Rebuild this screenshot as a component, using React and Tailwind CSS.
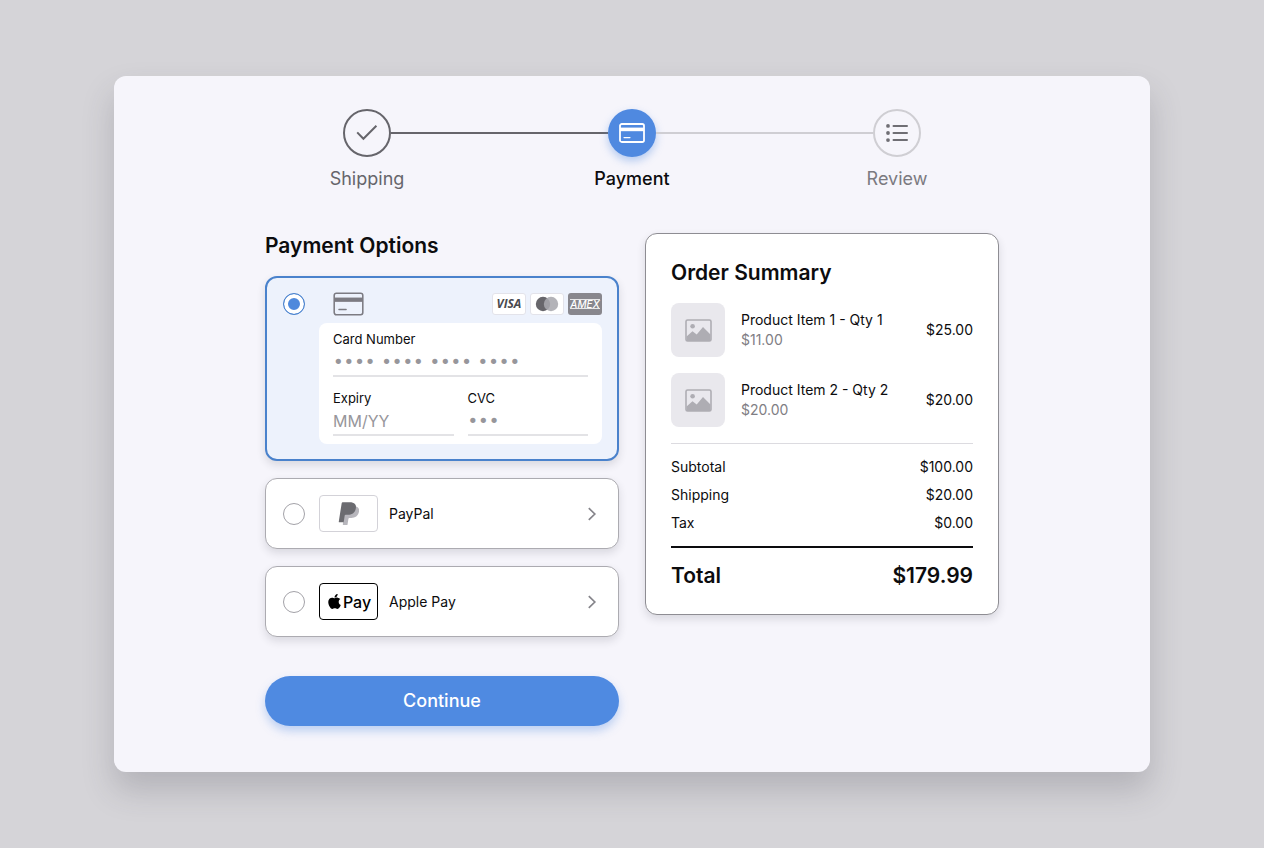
import React, { useState } from 'react';
import { FaApple } from 'react-icons/fa';

const items = [
    { id: 1, name: 'Product Item 1 - Qty 1', unitPrice: '$11.00', price: '$25.00' },
    { id: 2, name: 'Product Item 2 - Qty 2', unitPrice: '$20.00', price: '$20.00' },
];

const totals = [
    { label: 'Subtotal', value: '$100.00' },
    { label: 'Shipping', value: '$20.00' },
    { label: 'Tax', value: '$0.00' },
];

const orderTotal = '$179.99';

const CheckIcon = () => (
    <svg width="22" height="18" viewBox="0 0 22 18" fill="none" stroke="currentColor" strokeWidth="2" aria-hidden="true">
        <path d="M1.2 8.4 7.4 14.8 20.4 1.8" />
    </svg>
);

const CardIcon = ({ className, stroke = 1.8 }) => (
    <svg className={className} viewBox="0 0 26 20" fill="none" stroke="currentColor" strokeWidth={stroke} aria-hidden="true">
        <rect x="1" y="1" width="24" height="18" rx="1.8" />
        <path d="M1 6.4h24" strokeWidth="3.6" />
        <path d="M5 14.6h6" strokeLinecap="round" strokeWidth="1.2" />
    </svg>
);

const ListIcon = () => (
    <svg width="22" height="18" viewBox="0 0 22 18" fill="none" stroke="currentColor" aria-hidden="true">
        <path d="M7.5 1.9h13.5M7.5 9h13.5M7.5 16.1h13.5" strokeWidth="2" strokeLinecap="round" />
        <g fill="currentColor" stroke="none">
            <circle cx="2" cy="1.9" r="1.9" />
            <circle cx="2" cy="9" r="1.9" />
            <circle cx="2" cy="16.1" r="1.9" />
        </g>
    </svg>
);

const ImageIcon = () => (
    <svg width="27" height="23" viewBox="0 0 27 23" fill="none" aria-hidden="true">
        <rect x="1" y="1" width="25" height="21" rx="1.6" stroke="#aeadb3" strokeWidth="1.6" />
        <circle cx="7.6" cy="7.3" r="2.3" fill="#aeadb3" />
        <path d="M1.5 17.5 7.5 12.2l4.2 3.2L18 8 25.5 15.5V22h-24z" fill="#aeadb3" />
    </svg>
);

const PayPalIcon = () => (
    <svg width="21" height="24" viewBox="1 0 22.5 25" aria-hidden="true">
        <path
            transform="translate(4.4 4) scale(.95)"
            fill="#b7b6bc"
            d="M7.076 21.337H2.47a.641.641 0 0 1-.633-.74L4.944.901C5.026.382 5.474 0 5.998 0h7.46c2.57 0 4.578.543 5.69 1.81 1.01 1.15 1.304 2.42 1.012 4.287-.023.143-.047.288-.077.437-.983 5.05-4.349 6.797-8.647 6.797h-2.19c-.524 0-.968.382-1.05.9l-1.12 7.106z"
        />
        <path
            fill="#6b6b70"
            d="M7.076 21.337H2.47a.641.641 0 0 1-.633-.74L4.944.901C5.026.382 5.474 0 5.998 0h7.46c2.57 0 4.578.543 5.69 1.81 1.01 1.15 1.304 2.42 1.012 4.287-.023.143-.047.288-.077.437-.983 5.05-4.349 6.797-8.647 6.797h-2.19c-.524 0-.968.382-1.05.9l-1.12 7.106z"
        />
    </svg>
);

const ChevronIcon = () => (
    <svg className="ml-auto mr-1" width="10" height="14" viewBox="0 0 10 14" fill="none" stroke="#85848a" strokeWidth="1.7" aria-hidden="true">
        <path d="M1.8 1.2 7.8 7l-6 5.8" />
    </svg>
);

const radioClass = 'size-[22px] shrink-0 appearance-none rounded-full border border-[#a3a2a8] bg-white checked:border-[#4a82cc] checked:bg-[#4f89dc] checked:shadow-[inset_0_0_0_4px_#fff]';

const Stepper = () => (
    <ol className="mx-auto flex max-w-[610px] text-lg leading-6">
        <li className="flex w-20 flex-col items-center gap-2.5 text-[#66656b]">
            <span className="flex size-12 items-center justify-center rounded-full border-2 border-[#66656b]">
                <CheckIcon />
            </span>
            Shipping
        </li>
        <li aria-hidden="true" className="-mx-4 mt-[23px] h-0.5 flex-1 bg-[#66656b]" />
        <li className="flex w-20 flex-col items-center gap-2.5 font-medium text-[#0c0c0e]" aria-current="step">
            <span className="flex size-12 items-center justify-center rounded-full bg-[#4f89e0] text-white shadow-[0_4px_8px_rgba(79,137,224,0.4)]">
                <CardIcon className="h-5 w-[26px]" />
            </span>
            Payment
        </li>
        <li aria-hidden="true" className="-mx-4 mt-[23px] h-0.5 flex-1 bg-[#cfced3]" />
        <li className="flex w-20 flex-col items-center gap-2.5 text-[#7b7a80]">
            <span className="flex size-12 items-center justify-center rounded-full border-2 border-[#cfced3] text-[#6f6e74]">
                <ListIcon />
            </span>
            Review
        </li>
    </ol>
);

const CardBrands = () => (
    <div className="flex gap-1">
        <span className="flex h-[22px] w-[34px] items-center justify-center rounded-[3px] border border-[#e3e3ea] bg-white font-['Open_Sans'] text-xs font-bold italic text-[#4a4a4f]">
            VISA
        </span>
        <span className="flex h-[22px] w-[34px] items-center justify-center rounded-[3px] border border-[#e3e3ea] bg-white">
            <svg width="24" height="16" viewBox="0 0 24 16" role="img" aria-label="Mastercard">
                <circle cx="8" cy="8" r="7.2" fill="#67666b" />
                <circle cx="16" cy="8" r="7.2" fill="#a9a8ae" fillOpacity=".88" />
            </svg>
        </span>
        <span className="flex h-[22px] w-[34px] items-center justify-center rounded-[3px] bg-[#88878d] text-white">
            <span className="border-y border-white/80 text-[10px] leading-[8px] font-medium italic">AMEX</span>
        </span>
    </div>
);

const CardForm = () => (
    <div className="col-start-2 rounded-lg bg-white px-3.5 pt-[7px] pb-2 text-[13px] leading-[18px] text-[#0c0c0e]">
        <label htmlFor="card-number" className="block">Card Number</label>
        <input
            id="card-number"
            placeholder="•••• •••• •••• ••••"
            className="block h-[29px] w-full border-b-2 border-[#e3e3e6] font-['DejaVu_Sans'] text-lg outline-none placeholder:text-[#97969b]"
        />
        <div className="mt-3 grid grid-cols-2 gap-3.5">
            <div>
                <label htmlFor="expiry" className="block">Expiry</label>
                <input
                    id="expiry"
                    placeholder="MM/YY"
                    className="block h-[29px] w-full border-b-2 border-[#e3e3e6] text-base outline-none placeholder:text-[#97969b]"
                />
            </div>
            <div>
                <label htmlFor="cvc" className="block">CVC</label>
                <input
                    id="cvc"
                    placeholder="•••"
                    className="block h-[29px] w-full border-b-2 border-[#e3e3e6] font-['DejaVu_Sans'] text-lg outline-none placeholder:text-[#97969b]"
                />
            </div>
        </div>
    </div>
);

const PaymentOptions = () => {
    const [method, setMethod] = useState('card');

    const renderRow = (value, label, badge) => (
        <label className="flex items-center rounded-xl border border-[#acabb1] bg-white px-[17px] py-4 text-sm text-[#0c0c0e] shadow-[0_4px_8px_rgba(40,40,60,0.14)]">
            <input
                type="radio"
                name="method"
                checked={method === value}
                onChange={() => setMethod(value)}
                className={radioClass}
            />
            {badge}
            {label}
            <ChevronIcon />
        </label>
    );

    return (
        <form className="flex flex-col gap-[17px]" onSubmit={(e) => e.preventDefault()}>
            <h2 className="text-[21px] leading-[26px] font-semibold text-[#0c0c0e]">Payment Options</h2>

            <div className="grid grid-cols-[22px_1fr] gap-x-3.5 gap-y-2 rounded-xl border-2 border-[#4a82cc] bg-[#edf2fc] py-[15px] pr-[15px] pl-4 shadow-[0_4px_8px_rgba(40,40,60,0.14)]">
                <input
                    type="radio"
                    name="method"
                    aria-label="Credit card"
                    checked={method === 'card'}
                    onChange={() => setMethod('card')}
                    className={radioClass}
                />
                <div className="flex items-center justify-between pl-3.5">
                    <CardIcon className="-my-1 h-6 w-[31px] text-[#7c7b82]" stroke={1.3} />
                    <CardBrands />
                </div>
                <CardForm />
            </div>

            {renderRow('paypal', 'PayPal', (
                <span className="mr-[11px] ml-3.5 flex h-[37px] w-[59px] items-center justify-center rounded border border-[#d3d2d8]">
                    <PayPalIcon />
                </span>
            ))}
            {renderRow('apple', 'Apple Pay', (
                <span className="mr-[11px] ml-3.5 flex h-[37px] w-[59px] items-center justify-center rounded border border-black text-base font-medium text-black">
                    <FaApple size={17} />
                    Pay
                </span>
            ))}

            <button
                type="submit"
                className="mt-[22px] h-[50px] rounded-full bg-[#4f8ae1] text-lg font-medium text-white shadow-[0_5px_10px_rgba(79,138,225,0.35)]"
            >
                Continue
            </button>
        </form>
    );
};

const OrderSummary = () => (
    <section className="self-start rounded-xl border border-[#8e8d93] bg-white px-[25px] pt-[25px] pb-6 text-sm text-[#0c0c0e] shadow-[0_4px_8px_rgba(40,40,60,0.14)]">
        <h2 className="text-[21px] leading-7 font-semibold">Order Summary</h2>
        <ul className="mt-4 flex flex-col gap-4 border-b border-[#dcdbe0] pb-4">
            {items.map(item => (
                <li key={item.id} className="flex items-center gap-4">
                    <span className="flex size-[54px] items-center justify-center rounded-lg bg-[#e9e8ed]">
                        <ImageIcon />
                    </span>
                    <div className="flex-1 leading-5">
                        <p>{item.name}</p>
                        <p className="text-[#7f7e84]">{item.unitPrice}</p>
                    </div>
                    <span>{item.price}</span>
                </li>
            ))}
        </ul>
        <dl className="border-b-2 border-[#0c0c0e] py-[9px] leading-7">
            {totals.map(row => (
                <div key={row.label} className="flex justify-between">
                    <dt>{row.label}</dt>
                    <dd>{row.value}</dd>
                </div>
            ))}
        </dl>
        <p className="mt-3.5 flex justify-between text-[21px] leading-7 font-semibold">
            <span>Total</span>
            <span>{orderTotal}</span>
        </p>
    </section>
);

export default function App() {
    return (
        <div className="flex min-h-screen items-center justify-center bg-[#d5d4d8] p-6 font-[Inter,sans-serif]">
            <main className="w-full max-w-[1036px] rounded-xl bg-[#f6f5fb] px-6 pt-[33px] pb-[46px] shadow-[0_18px_32px_rgba(60,60,75,0.22)]">
                <Stepper />
                <div className="mx-auto mt-[42px] grid max-w-[734px] grid-cols-2 gap-[26px]">
                    <PaymentOptions />
                    <OrderSummary />
                </div>
            </main>
        </div>
    );
}
